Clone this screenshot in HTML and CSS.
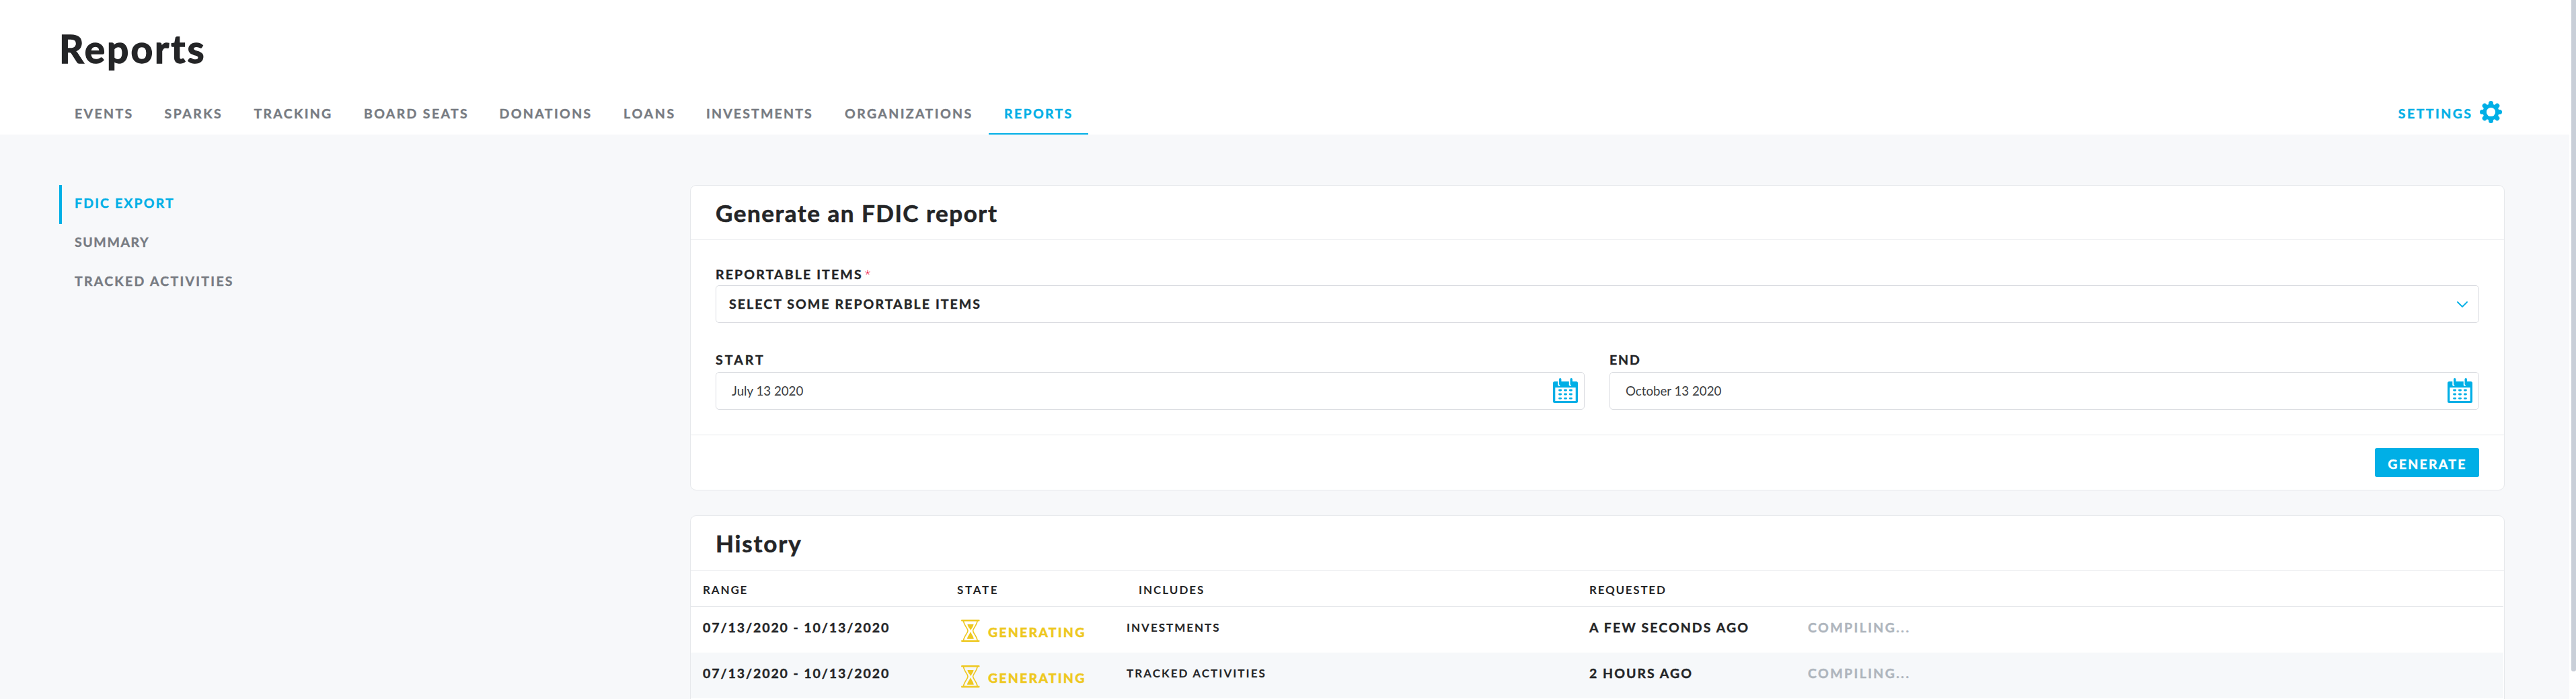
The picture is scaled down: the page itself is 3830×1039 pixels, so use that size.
FILE: index.html
```
<!DOCTYPE html>
<html lang="en">
<head>
<meta charset="utf-8">
<title>Reports</title>
<link rel="stylesheet" href="styles.css">
</head>
<body>
<svg class="defs" aria-hidden="true">
  <symbol id="calendar" viewBox="0 0 37 37">
    <path fill="currentColor" fill-rule="evenodd" d="M2.5 5h32A2.500 2.500 0 0 1 37 7.500v27a2.500 2.500 0 0 1-2.500 2.500h-32A2.500 2.500 0 0 1 0 34.500v-27A2.500 2.500 0 0 1 2.500 5zM3.300 14v20h30.400V14z"/>
    <path d="M7.300 4v5a1.700 1.700 0 0 0 3.400 1.500V4zM23.800 4v5a1.700 1.700 0 0 0 3.400 1.500V4z" fill="#fff"/>
    <rect x="9" y="0" width="3.400" height="10.500" rx="1.700" fill="currentColor"/>
    <rect x="25.500" y="0" width="3.400" height="10.500" rx="1.700" fill="currentColor"/>
    <path d="M9.500 18h2.200M17.400 18h2.200M25.300 18h2.200M9.500 24h2.200M17.400 24h2.200M25.300 24h2.200M9.500 30.200h2.200M17.400 30.200h2.200M25.300 30.200h2.200" stroke="currentColor" stroke-width="2.800" stroke-linecap="round"/>
  </symbol>
  <symbol id="hourglass" viewBox="0 0 28 33">
    <path d="M1.200 1.200h25.200M1.200 31.800h25.200" stroke="currentColor" stroke-width="2.400" stroke-linecap="round"/>
    <path d="M3.500 2c.8 6.500 6.500 11 6.500 14.500S4.300 24.500 3.500 31M24.100 2c-.8 6.500-6.500 11-6.500 14.500s5.700 8 6.500 14.500" fill="none" stroke="currentColor" stroke-width="1.700"/>
    <path d="M9.500 7h9c0 3-2.500 5-4 9-2.500-4-5-6-5-9zM14 18c1.500 4 4.500 7 4.800 10.800H9C9.200 25 12.500 22 14 18z" fill="currentColor"/>
  </symbol>
</svg>
<div class="page">
  <header class="header">
    <h1 class="title">Reports</h1>
    <div class="bar">
      <nav class="tabs">
        <a class="tab events">EVENTS</a>
        <a class="tab sparks">SPARKS</a>
        <a class="tab tracking">TRACKING</a>
        <a class="tab boards">BOARD SEATS</a>
        <a class="tab donations">DONATIONS</a>
        <a class="tab loans">LOANS</a>
        <a class="tab investments">INVESTMENTS</a>
        <a class="tab organizations">ORGANIZATIONS</a>
        <a class="tab reports active">REPORTS</a>
      </nav>
      <a class="settings">SETTINGS
        <svg class="gear" viewBox="-16.500 -16.500 33 33">
          <g stroke="currentColor" stroke-width="7" stroke-linecap="round">
            <path d="M0-13V-9M0 13V9M-13 0H-9M13 0H9M-9.300-9.300l3 3M9.300-9.300l-3 3M-9.300 9.300l3-3M9.300 9.300l-3-3"/>
          </g>
          <circle r="9.200" fill="none" stroke="currentColor" stroke-width="5.600"/>
          <circle r="6.600" fill="#fff"/>
        </svg>
      </a>
    </div>
  </header>
  <div class="content">
    <aside class="side">
      <a class="side-item fdic active">FDIC EXPORT</a>
      <a class="side-item summary">SUMMARY</a>
      <a class="side-item tracked">TRACKED ACTIVITIES</a>
    </aside>
    <main class="main">
      <section class="card">
        <h2 class="card-title">Generate an FDIC report</h2>
        <div class="form">
          <div class="label items-label">REPORTABLE ITEMS<svg class="star" viewBox="0 0 8 8"><path d="M4 .3V4L.5 2.900M4 4l3.500-1.100M4 4L1.800 7.200M4 4l2.200 3.200" fill="none" stroke="currentColor" stroke-width="1"/></svg></div>
          <div class="field select"><span>SELECT SOME REPORTABLE ITEMS</span>
            <svg class="chevron" viewBox="0 0 16 10"><path d="M1 1l7 7 7-7" fill="none" stroke="currentColor" stroke-width="1.800" stroke-linecap="round"/></svg>
          </div>
          <div class="dates">
            <div>
              <div class="label start">START</div>
              <div class="field date"><span>July 13 2020</span><svg class="cal"><use href="#calendar"/></svg></div>
            </div>
            <div>
              <div class="label end">END</div>
              <div class="field date"><span>October 13 2020</span><svg class="cal"><use href="#calendar"/></svg></div>
            </div>
          </div>
        </div>
        <div class="card-foot"><button class="button">GENERATE</button></div>
      </section>
      <section class="card history">
        <h2 class="card-title history-title">History</h2>
        <div class="row head">
          <span class="h-range">RANGE</span><span class="h-state">STATE</span><span class="h-includes">INCLUDES</span><span class="h-requested">REQUESTED</span><span></span>
        </div>
        <div class="row">
          <span class="range">07/13/2020 - 10/13/2020</span>
          <span class="state"><svg class="glass"><use href="#hourglass"/></svg><b>GENERATING</b></span>
          <span class="includes inv">INVESTMENTS</span>
          <span class="ago">A FEW SECONDS AGO</span>
          <span class="compiling">COMPILING...</span>
        </div>
        <div class="row alt">
          <span class="range">07/13/2020 - 10/13/2020</span>
          <span class="state"><svg class="glass"><use href="#hourglass"/></svg><b>GENERATING</b></span>
          <span class="includes trk">TRACKED ACTIVITIES</span>
          <span class="ago hours">2 HOURS AGO</span>
          <span class="compiling">COMPILING...</span>
        </div>
      </section>
    </main>
  </div>
</div>
<div class="scroll"><div class="thumb"></div></div>
</body>
</html>
```
FILE: styles.css
```
* { box-sizing: border-box; }
body {
  margin: 0;
  height: 1039px;
  overflow: hidden;
  display: flex;
  background: #fff;
  color: #242527;
  font: 700 19.5px/24px Lato, "Open Sans", sans-serif;
  -webkit-text-stroke: 0.4px currentColor;
}
h1, h2 { margin: 0; font-weight: 700; -webkit-text-stroke-width: 0.6px; }
svg { display: block; flex: none; }
.defs { position: absolute; width: 0; height: 0; }
.page { width: 3820px; height: 1039px; flex: none; overflow: hidden; background: #f7f8fa; }

.header { height: 200px; padding: 42px 100px 0 88px; background: #fff; }
.title { font-size: 57px; line-height: 60px; letter-spacing: 2.95px; height: 95px; -webkit-text-stroke-width: 1.4px; }
.bar { display: flex; justify-content: space-between; height: 63px; }
.tabs {
  display: grid;
  grid-template-columns: 133.5px 133px 163.5px 201.5px 184.5px 123px 206px 237px 148px;
}
.tab { padding-left: 23px; line-height: 63px; color: #777b82; white-space: nowrap; }
.tab.active { color: #00afe6; box-shadow: inset 0 -2px #00afe6; }
.events { letter-spacing: 2.37px; }
.sparks { letter-spacing: 2.45px; }
.tracking { letter-spacing: 2.3px; }
.boards { letter-spacing: 2.34px; }
.donations { letter-spacing: 2.38px; }
.loans { letter-spacing: 2.77px; }
.investments { letter-spacing: 2.17px; }
.organizations { letter-spacing: 2.4px; }
.reports { letter-spacing: 2.36px; }
.settings { display: flex; line-height: 63px; color: #00afe6; letter-spacing: 2.46px; }
.gear { width: 33px; height: 33px; margin: 13px 0 0 10.5px; }

.content { display: flex; padding: 75px 96px 0 88px; }
.side { width: 938px; }
.side-item { display: block; height: 57.5px; padding-left: 23px; line-height: 53px; color: #777b82; }
.side-item.active { height: 58px; padding-left: 19px; border-left: 4px solid #00afe6; color: #00afe6; line-height: 54px; }
.fdic { letter-spacing: 2.14px; }
.summary { letter-spacing: 1.6px; }
.tracked { letter-spacing: 2.27px; }

.main { width: 2698px; }
.card { border: 1px solid #e6e8eb; border-radius: 9px; background: #fff; overflow: hidden; height: 454px; }
.card-title {
  height: 81px;
  padding-left: 37px;
  border-bottom: 1px solid #e4e6ea;
  font-size: 35px;
  line-height: 80px;
  letter-spacing: 1.52px;
}
.form { height: 289px; padding: 38px 37px 0; }
.label { height: 29px; line-height: 25px; }
.items-label { display: flex; letter-spacing: 2.15px; }
.star { width: 8px; height: 8px; margin: 6px 0 0 3px; color: #f0274f; }
.field {
  display: flex;
  justify-content: space-between;
  height: 56px;
  border: 1px solid #d9dbe0;
  border-radius: 5px;
  line-height: 54px;
}
.select { padding: 0 16px 0 19px; letter-spacing: 2.08px; line-height: 54px; }
.chevron { width: 16px; height: 10px; margin-top: 23px; color: #00afe6; }
.dates { display: grid; grid-template-columns: 1292px 1293px; gap: 37px; margin-top: 42px; }
.dates .label { height: 31px; }
.start { letter-spacing: 3.07px; }
.end { letter-spacing: 1.88px; }
.date { padding: 0 9px 0 23px; font-size: 18.7px; font-weight: 400; color: #3c3e42; -webkit-text-stroke-width: 0; }
.cal { width: 37px; height: 37px; margin-top: 8px; color: #00afe6; }
.card-foot { display: flex; justify-content: flex-end; padding: 19px 37px 0; border-top: 1px solid #e6e8eb; height: 82px; }
.button {
  width: 155px;
  height: 43px;
  padding: 4px 0 0 1px;
  border: 0;
  border-radius: 3px;
  background: #00afe6;
  color: #fff;
  font: inherit;
  letter-spacing: 2.28px;
}

.history { margin-top: 37px; height: 400px; border-radius: 9px 9px 0 0; }
.history-title { letter-spacing: 1.85px; }
.row {
  display: grid;
  grid-template-columns: 383px 248px 688px 324px 1fr;
  height: 68px;
  margin-right: 1px;
  padding: 19px 0 0 18px;
}
.row.alt { background: #f6f8fa; }
.row.head { height: 54px; padding-top: 17px; border-bottom: 1px solid #e6e8eb; font-size: 17px; -webkit-text-stroke-width: 0; }
.h-range { letter-spacing: 1.85px; }
.h-state { letter-spacing: 2.65px; margin-left: -5px; }
.h-includes { letter-spacing: 1.98px; margin-left: 17px; }
.h-requested { letter-spacing: 1.75px; margin-left: -1px; }
.range { letter-spacing: 1.92px; }
.state { display: flex; color: #eec81f; letter-spacing: 2.2px; }
.state b { margin: 7px 0 0 12px; }
.glass { width: 28px; height: 33px; margin-left: 1px; }
.includes { font-size: 17px; margin-left: -1px; -webkit-text-stroke-width: 0.1px; }
.inv { letter-spacing: 1.98px; }
.trk { letter-spacing: 2.06px; }
.ago { letter-spacing: 2.08px; margin-left: -1px; }
.hours { letter-spacing: 2.03px; }
.compiling { color: #aeb5bd; letter-spacing: 2.4px; }

.scroll { width: 10px; flex: none; padding-left: 3px; background: #fff; }
.thumb { height: 998px; background: #c9cfd8; border-radius: 0 0 3px 3px; }
```
